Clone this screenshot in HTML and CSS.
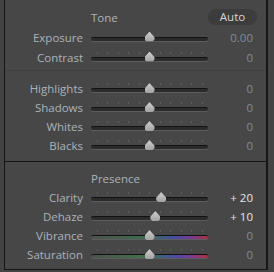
FILE: index.html
```html
<!DOCTYPE html>
<html lang="en">
<head>
  <meta charset="UTF-8">
  <meta name="viewport" content="width=device-width, initial-scale=1.0">
  <title>Basic - Tone</title>
  <link rel="stylesheet" href="styles.css">
</head>
<body>
  <div class="panel">
    <div class="section">
      <div class="heading">
        <span class="title">Tone</span>
        <button type="button" class="auto">Auto</button>
      </div>
      <div class="group tall">
        <div class="row">
          <span class="label">Exposure</span>
          <div class="slider"><div class="track no-ticks"><span class="thumb" style="left: 50%"></span></div></div>
          <span class="value">0.00</span>
        </div>
        <div class="row">
          <span class="label">Contrast</span>
          <div class="slider"><div class="track"><span class="thumb" style="left: 50%"></span></div></div>
          <span class="value">0</span>
        </div>
      </div>
      <div class="group divided">
        <div class="row">
          <span class="label">Highlights</span>
          <div class="slider"><div class="track"><span class="thumb" style="left: 50%"></span></div></div>
          <span class="value">0</span>
        </div>
        <div class="row">
          <span class="label">Shadows</span>
          <div class="slider"><div class="track"><span class="thumb" style="left: 50%"></span></div></div>
          <span class="value">0</span>
        </div>
        <div class="row">
          <span class="label">Whites</span>
          <div class="slider"><div class="track"><span class="thumb" style="left: 50%"></span></div></div>
          <span class="value">0</span>
        </div>
        <div class="row">
          <span class="label">Blacks</span>
          <div class="slider"><div class="track"><span class="thumb" style="left: 50%"></span></div></div>
          <span class="value">0</span>
        </div>
      </div>
    </div>

    <div class="section presence">
      <div class="heading">
        <span class="title">Presence</span>
      </div>
      <div class="group">
        <div class="row">
          <span class="label">Clarity</span>
          <div class="slider"><div class="track"><span class="thumb" style="left: 60%"></span></div></div>
          <span class="value changed">+ 20</span>
        </div>
        <div class="row">
          <span class="label">Dehaze</span>
          <div class="slider"><div class="track"><span class="thumb" style="left: 55%"></span></div></div>
          <span class="value changed">+ 10</span>
        </div>
        <div class="row">
          <span class="label">Vibrance</span>
          <div class="slider"><div class="track vibrance"><span class="thumb" style="left: 50%"></span></div></div>
          <span class="value">0</span>
        </div>
        <div class="row">
          <span class="label">Saturation</span>
          <div class="slider"><div class="track saturation"><span class="thumb" style="left: 50%"></span></div></div>
          <span class="value">0</span>
        </div>
      </div>
    </div>
  </div>
</body>
</html>
```

FILE: styles.css
```css
html, body {
  margin: 0;
  height: 100%;
  overflow: hidden;
}
body {
  background-color: #434343;
  font-family: "Open Sans", "Noto Sans", sans-serif;
  font-size: 11px;
}
.panel {
  margin-left: 4px;
  width: 261px;
  height: 269px;
  box-sizing: content-box;
  background-color: #474747;
  border-left: 1px solid #161616;
  border-right: 2px solid #161616;
  border-bottom: 1px solid #161616;
}
.section {
  padding-top: 7px;
  padding-bottom: 6px;
}
.presence {
  border-top: 1px solid #161616;
  padding-top: 6px;
  padding-bottom: 0;
}
.heading {
  display: flex;
  align-items: center;
  height: 20px;
  padding-left: 86px;
  padding-right: 9px;
}
.title {
  color: #aab3bc;
  font-size: 11.5px;
}
.auto {
  margin-left: auto;
  width: 49px;
  height: 16px;
  padding: 0;
  border: none;
  border-radius: 8px;
  background-color: #3c3c3c;
  color: #d6d6d6;
  font-family: inherit;
  font-size: 11.5px;
  line-height: 16px;
}
.group.divided {
  margin-top: 3px;
  padding-top: 8px;
  border-top: 1px solid #404040;
}
.row {
  display: grid;
  grid-template-columns: 78px 125px 45px;
  height: 19px;
  align-items: center;
}
.group.tall .row {
  height: 20px;
}
.row .label {
  text-align: right;
  color: #aab3bc;
  font-size: 11.5px;
}
.row .value {
  text-align: right;
  color: #7d8c9c;
  font-size: 11.5px;
}
.row .value.changed {
  color: #e6e6e6;
}
.slider {
  height: 100%;
  display: flex;
  align-items: center;
  padding-left: 8px;
  padding-top: 3px;
  box-sizing: border-box;
}
.track {
  position: relative;
  width: 100%;
  height: 4px;
  border-radius: 2px;
  background-color: #2b2b2b;
  border-top: 1px solid #121212;
  box-sizing: border-box;
  box-shadow: 0 1px 0 rgba(255, 255, 255, 0.12);
}
.track::before {
  content: "";
  position: absolute;
  top: -6px;
  left: 6px;
  width: 107px;
  height: 2px;
  background: repeating-linear-gradient(to right, #5e5e5e 0 1px, transparent 1px 10.5px);
}
.track.no-ticks::before {
  display: none;
}
.track.vibrance {
  background: linear-gradient(to right, #4b524b 0%, #3f6a4c 40%, #3b6478 58%, #4a49a4 72%, #7a3a90 86%, #b23040 100%);
}
.track.saturation {
  background: linear-gradient(to right, #4e504e 0%, #3f7048 42%, #3a6a6a 56%, #4c4aa8 72%, #7c3a8e 86%, #b42c3c 100%);
}
.thumb {
  position: absolute;
  top: -6px;
  width: 10px;
  height: 10px;
  margin-left: -5px;
  filter: drop-shadow(0 0 0.6px #111);
}
.thumb::before {
  content: "";
  display: block;
  width: 100%;
  height: 100%;
  background: linear-gradient(to bottom, #cfcfcf, #a2a2a2);
  clip-path: polygon(50% 0, 100% 55%, 100% 82%, 82% 100%, 18% 100%, 0 82%, 0 55%);
}
```
